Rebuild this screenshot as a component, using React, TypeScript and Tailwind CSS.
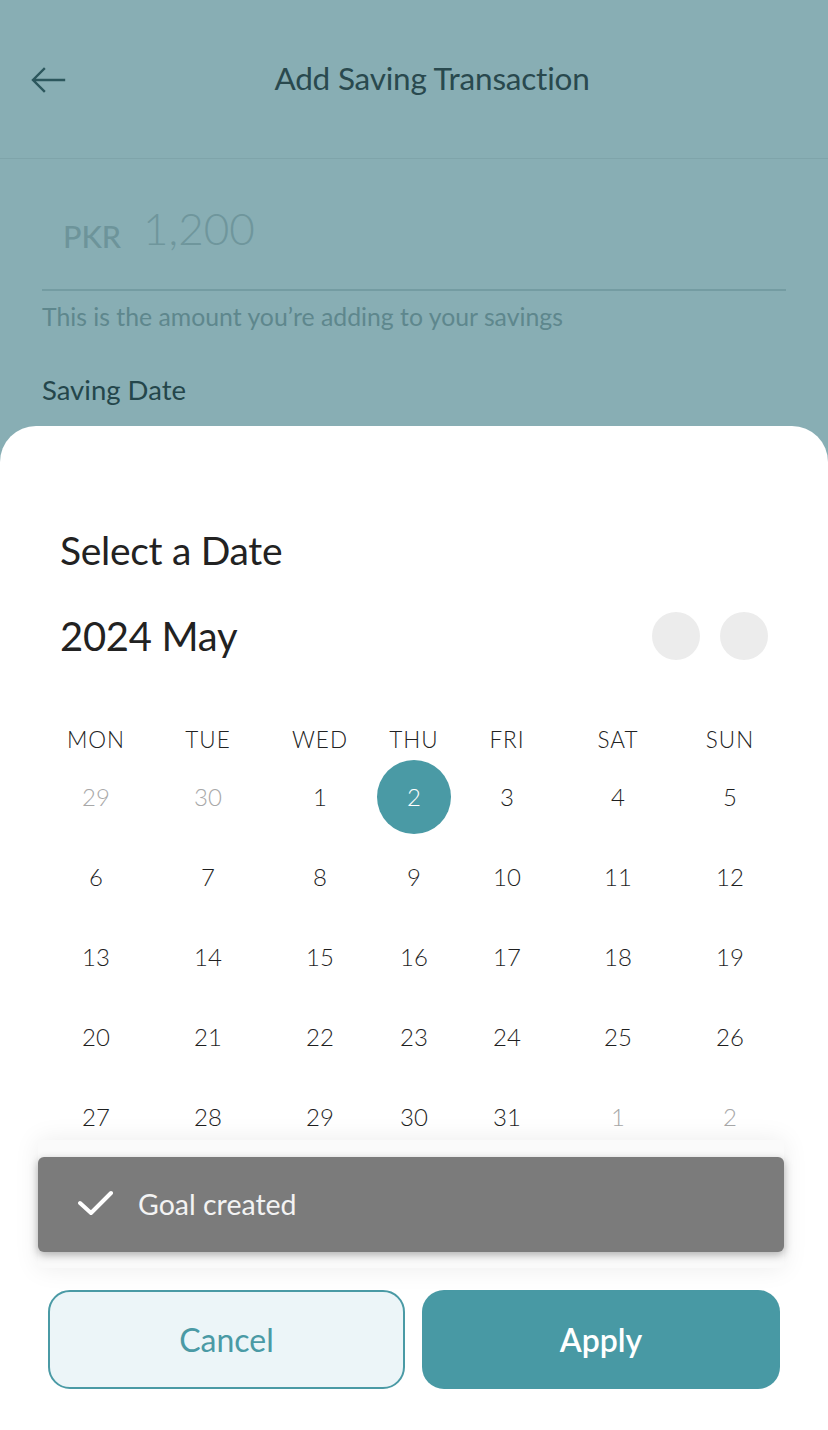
import React from "react";

const WEEKDAYS = ["MON", "TUE", "WED", "THU", "FRI", "SAT", "SUN"];

type Day = { n: number; muted?: boolean; selected?: boolean };

const WEEKS: Day[][] = [
  [{ n: 29, muted: true }, { n: 30, muted: true }, { n: 1 }, { n: 2, selected: true }, { n: 3 }, { n: 4 }, { n: 5 }],
  [{ n: 6 }, { n: 7 }, { n: 8 }, { n: 9 }, { n: 10 }, { n: 11 }, { n: 12 }],
  [{ n: 13 }, { n: 14 }, { n: 15 }, { n: 16 }, { n: 17 }, { n: 18 }, { n: 19 }],
  [{ n: 20 }, { n: 21 }, { n: 22 }, { n: 23 }, { n: 24 }, { n: 25 }, { n: 26 }],
  [{ n: 27 }, { n: 28 }, { n: 29 }, { n: 30 }, { n: 31 }, { n: 1, muted: true }, { n: 2, muted: true }],
];

const cols = "grid grid-cols-[112px_112px_112px_76px_110px_112px_112px]";

export default function App() {
  return (
    <div
      className="w-[828px] h-[1430px] overflow-hidden bg-[#88aeb4] flex flex-col"
      style={{ fontFamily: "Lato, 'Open Sans', sans-serif" }}
    >
      {/* Page behind the sheet */}
      <div className="h-[426px] shrink-0">
        <header className="h-[159px] relative flex items-center justify-center pl-[36px] border-b border-[#7fa4aa]">
          <button className="absolute left-[30px] top-[66px] w-[36px] h-[28px] flex items-center justify-center text-[#2c575d]">
            <svg width="36" height="28" viewBox="0 0 36 28" fill="none">
              <path d="M34 14H4M14 3L3 14l11 11" stroke="currentColor" strokeWidth="2.4" strokeLinecap="square" />
            </svg>
          </button>
          <h1 className="text-[31.5px] text-[#29494e] tracking-[-0.2px]">Add Saving Transaction</h1>
        </header>

        <div className="px-[42px]">
          <div className="h-[132px] flex items-end gap-[22px] pl-[21px] pb-[39px] border-b-2 border-[#749ca2]">
            <span className="text-[30.5px] font-medium text-[#6d949a] leading-none mb-[-1px]">PKR</span>
            <span className="text-[44px] font-light text-[#6f969c] leading-none">1,200</span>
          </div>
          <p className="mt-[7px] text-[24.8px] text-[#5e878d]">This is the amount you’re adding to your savings</p>
          <p className="mt-[34px] text-[27.5px] text-[#24464b]">Saving Date</p>
        </div>
      </div>

      {/* Bottom sheet */}
      <div className="relative flex-1 bg-white rounded-t-[36px] pt-[101px]">
        <div className="px-[60px]">
          <h2 className="text-[39px] leading-[46px] text-[#222222] tracking-[-0.3px]">Select a Date</h2>
          <div className="mt-[39px] flex items-center justify-between">
            <span className="text-[40px] leading-[48px] text-[#222222] tracking-[-0.3px]">2024 May</span>
            <div className="flex gap-[20px]">
              <button className="w-[48px] h-[48px] rounded-full bg-[#ececec]" />
              <button className="w-[48px] h-[48px] rounded-full bg-[#ececec]" />
            </div>
          </div>
        </div>

        <div className="px-[40px] mt-[65px]">
          <div className={`${cols} h-[30px] items-center`}>
            {WEEKDAYS.map((d) => (
              <div key={d} className="text-center text-[22.5px] font-light tracking-[1px] text-[#222222] leading-none">
                {d}
              </div>
            ))}
          </div>
          <div className="mt-[2px]">
            {WEEKS.map((week, wi) => (
              <div key={wi} className={`${cols} h-[80px] items-center`}>
                {week.map((day, di) => (
                  <div key={di} className="flex items-center justify-center">
                    {day.selected ? (
                      <span className="w-[74px] h-[74px] rounded-full bg-[#4a9aa5] text-white flex items-center justify-center text-[24px] font-light">
                        {day.n}
                      </span>
                    ) : (
                      <span
                        className={
                          day.muted
                            ? "text-[24px] font-light text-[#a8a8a8]"
                            : "text-[24px] font-light text-[#1f1f1f]"
                        }
                      >
                        {day.n}
                      </span>
                    )}
                  </div>
                ))}
              </div>
            ))}
          </div>
        </div>

        {/* Snackbar */}
        <div className="absolute left-[38px] top-[714px] w-[746px] h-[128px] bg-[#fafafa] shadow-[0_0_24px_rgba(0,0,0,0.08)] flex items-center">
          <div className="w-full h-[95px] rounded-[6px] bg-[#7b7b7b] shadow-[0_3px_8px_rgba(0,0,0,0.3)] flex items-center pl-[40px] gap-[24px]">
            <svg width="36" height="28" viewBox="0 0 36 28" fill="none">
              <path d="M2 13l11 10L33 3" stroke="#ffffff" strokeWidth="4" strokeLinecap="round" strokeLinejoin="round" />
            </svg>
            <span className="text-[28.5px] text-[#f3f3f3]">Goal created</span>
          </div>
        </div>

        <div className="px-[48px] mt-[133px] flex gap-[17px]">
          <button className="w-[357px] h-[99px] rounded-[22px] border-2 border-[#4a9aa5] bg-[#ecf5f8] text-[32px] text-[#4a9aa5]">
            Cancel
          </button>
          <button className="w-[358px] h-[99px] rounded-[22px] bg-[#4899a4] text-[32px] font-semibold text-white">
            Apply
          </button>
        </div>
      </div>
    </div>
  );
}
